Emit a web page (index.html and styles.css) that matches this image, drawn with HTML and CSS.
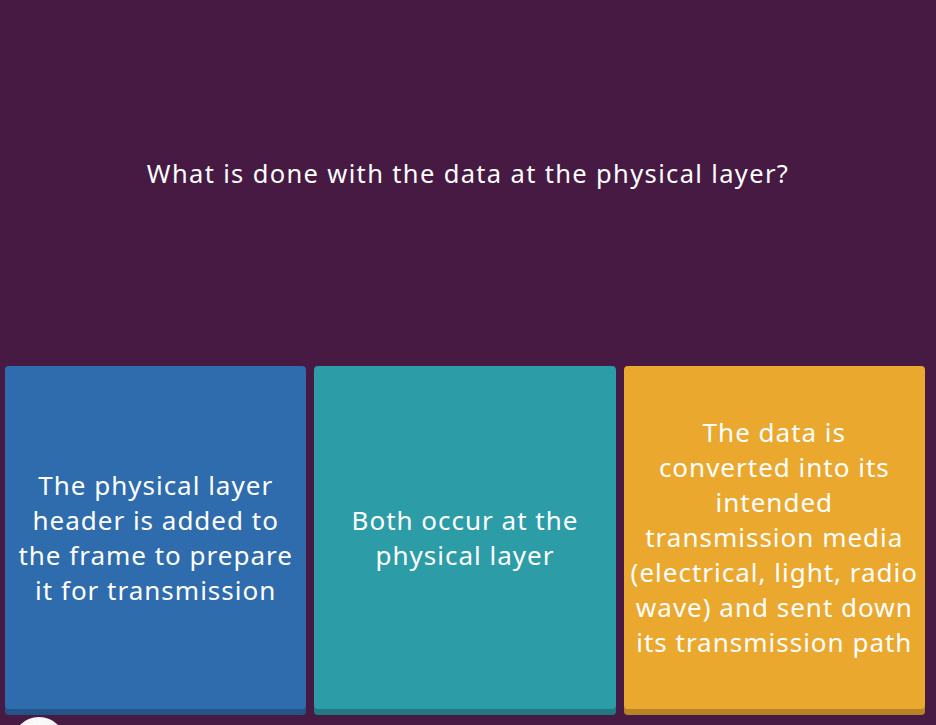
FILE: index.html
```html
<!DOCTYPE html>
<html lang="en">
<head>
<meta charset="utf-8">
<title>Quiz</title>
<link rel="stylesheet" href="styles.css">
</head>
<body>
<main class="quiz">
  <section class="question">
    <p class="question-text">What is done with the data at the physical layer?</p>
  </section>
  <section class="answers">
    <div class="answer answer-blue"><span>The physical layer<br>header is added to<br>the frame to prepare<br>it for transmission</span></div>
    <div class="answer answer-teal"><span>Both occur at the<br>physical layer</span></div>
    <div class="answer answer-orange"><span>The data is<br>converted into its<br>intended<br>transmission media<br>(electrical, light, radio<br>wave) and sent down<br>its transmission path</span></div>
  </section>
  <div class="avatar"></div>
</main>
</body>
</html>
```

FILE: styles.css
```css
html, body {
  margin: 0;
  padding: 0;
  background: #461a42;
}
body {
  font-family: "Noto Sans", "Open Sans", sans-serif;
  color: #ffffff;
  overflow: hidden;
}
.quiz {
  position: relative;
  width: 936px;
  height: 725px;
  display: flex;
  flex-direction: column;
  overflow: hidden;
}
.question {
  height: 366px;
  box-sizing: border-box;
  padding-bottom: 20px;
  display: flex;
  align-items: center;
  justify-content: center;
}
.question-text {
  margin: 0;
  font-size: 25.5px;
  letter-spacing: 1.35px;
  line-height: 32px;
  text-align: center;
}
.answers {
  display: flex;
  gap: 8px;
  padding: 0 11px 0 5px;
  height: 349px;
}
.answer {
  flex: 1;
  border-radius: 4px;
  box-sizing: border-box;
  padding: 0 4px 6px;
  display: flex;
  align-items: center;
  justify-content: center;
  text-align: center;
  font-size: 26px;
  letter-spacing: 1px;
  line-height: 35px;
  white-space: nowrap;
  box-shadow: inset 0 -6px 0 rgba(0, 0, 0, 0.22);
}
.answer-blue { background: #2f6cad; }
.answer-teal { background: #2c9ca6; }
.answer-orange { background: #eba82f; }
.avatar {
  position: absolute;
  left: 12px;
  top: 717px;
  width: 54px;
  height: 54px;
  border-radius: 50%;
  background: radial-gradient(circle at 50% 25%, #ffffff 0%, #eeeeee 55%, #c9c9c9 100%);
}
```
